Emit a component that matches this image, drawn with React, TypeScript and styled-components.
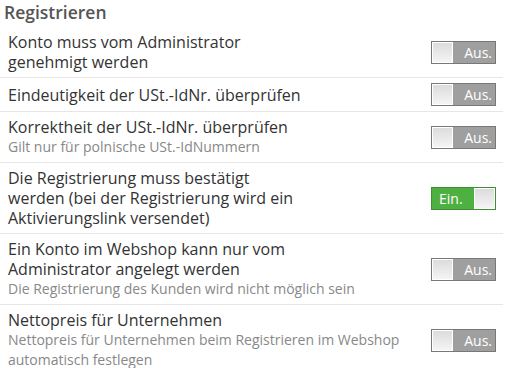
import React, { useState } from 'react';
import styled, { createGlobalStyle } from 'styled-components';

const GlobalStyle = createGlobalStyle`
    body {
        margin: 0;
        background: #fff;
        font-family: 'Open Sans', 'Liberation Sans', sans-serif;
    }
`;

const Panel = styled.section`
    width: 503px;
`;

const Heading = styled.h2`
    color: #555;
    font-size: 17.5px;
    font-weight: 600;
    line-height: 22px;
    margin: 0;
    padding: 1px 4px 4px;
`;

const Row = styled.div`
    align-items: center;
    border-top: 1px solid #e6e6e6;
    display: flex;
    padding: 5px 7px 5px 8px;

    &:first-of-type {
        border-top: none;
    }
`;

const TextColumn = styled.div`
    flex: 1;
    min-width: 0;
    padding-right: 24px;
`;

const Title = styled.div`
    color: #333;
    font-size: 16px;
    line-height: 20px;
    max-width: 296px;
`;

const Hint = styled.div`
    color: #888;
    font-size: 14px;
    line-height: 20px;
`;

const Switch = styled.button<{ $on: boolean }>`
    align-items: center;
    background: ${props => (props.$on ? '#4db041' : '#9f9f9f')};
    border: 1px solid ${props => (props.$on ? '#3d8f31' : '#787878')};
    cursor: pointer;
    display: flex;
    flex-direction: ${props => (props.$on ? 'row-reverse' : 'row')};
    flex-shrink: 0;
    height: 23px;
    padding: 0;
    width: 65px;
`;

const Knob = styled.span`
    align-self: stretch;
    background: linear-gradient(#dcdcdc, #f4f4f4);
    border: 1px solid #fff;
    box-sizing: border-box;
    width: 21px;
`;

const SwitchLabel = styled.span<{ $on: boolean }>`
    color: #fff;
    flex: 1;
    font-family: 'Open Sans', 'Liberation Sans', sans-serif;
    font-size: 14px;
    line-height: 21px;
    padding: ${props => (props.$on ? '0 0 0 7px' : '0 3px 0 0')};
    text-align: ${props => (props.$on ? 'left' : 'right')};
`;

interface Setting {
    title: string;
    hint?: string;
    on: boolean;
}

const SETTINGS: Setting[] = [
    { title: 'Konto muss vom Administrator genehmigt werden', on: false },
    { title: 'Eindeutigkeit der USt.-IdNr. überprüfen', on: false },
    {
        title: 'Korrektheit der USt.-IdNr. überprüfen',
        hint: 'Gilt nur für polnische USt.-IdNummern',
        on: false,
    },
    {
        title: 'Die Registrierung muss bestätigt werden (bei der Registrierung wird ein Aktivierungslink versendet)',
        on: true,
    },
    {
        title: 'Ein Konto im Webshop kann nur vom Administrator angelegt werden',
        hint: 'Die Registrierung des Kunden wird nicht möglich sein',
        on: false,
    },
    {
        title: 'Nettopreis für Unternehmen',
        hint: 'Nettopreis für Unternehmen beim Registrieren im Webshop automatisch festlegen',
        on: false,
    },
];

const Toggle = ({ on, onClick }: { on: boolean; onClick: () => void }) => (
    <Switch $on={on} onClick={onClick}>
        <Knob />
        <SwitchLabel $on={on}>{on ? 'Ein.' : 'Aus.'}</SwitchLabel>
    </Switch>
);

export default function App() {
    const [values, setValues] = useState(SETTINGS.map(s => s.on));

    const flip = (index: number) => {
        setValues(prev => prev.map((v, i) => (i === index ? !v : v)));
    };

    return (
        <Panel>
            <GlobalStyle />
            <Heading>Registrieren</Heading>
            {SETTINGS.map((item, i) => (
                <Row key={item.title}>
                    <TextColumn>
                        <Title>{item.title}</Title>
                        {item.hint && <Hint>{item.hint}</Hint>}
                    </TextColumn>
                    <Toggle on={values[i]} onClick={() => flip(i)} />
                </Row>
            ))}
        </Panel>
    );
}
